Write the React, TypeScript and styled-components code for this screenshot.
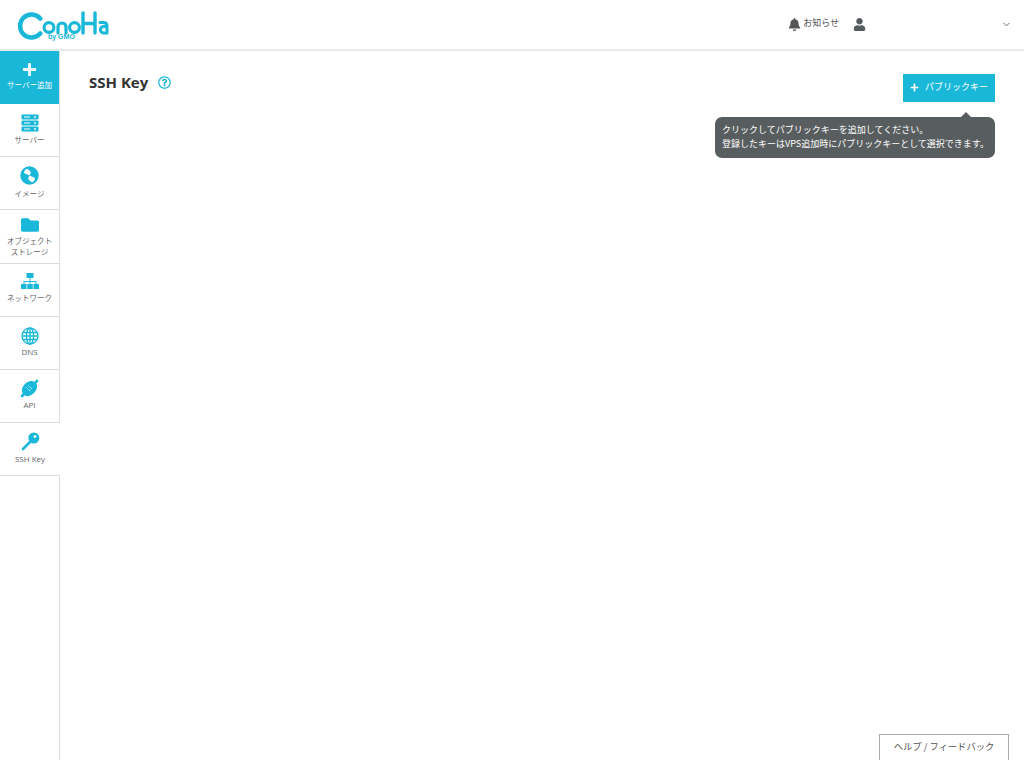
import React from "react";
import styled, { createGlobalStyle } from "styled-components";
import { FaPlus, FaBell, FaUser, FaFolder, FaRegQuestionCircle } from "react-icons/fa";
import { FiChevronDown } from "react-icons/fi";

const CYAN = "#19b8d9";
const FONT = `"Noto Sans CJK JP", "Noto Sans", sans-serif`;

const GlobalStyle = createGlobalStyle`
  html, body {
    margin: 0;
    height: 100%;
    background: #fff;
    font-family: ${FONT};
    overflow: hidden;
  }
`;

const Page = styled.div`
  width: 1024px;
  height: 760px;
  display: flex;
  flex-direction: column;
  position: relative;
  overflow: hidden;
`;

const Header = styled.header`
  height: 49px;
  flex: none;
  display: flex;
  align-items: center;
  padding: 0 12px 0 18px;
  border-bottom: 2px solid #e9e9e9;
`;

const LogoBox = styled.div`
  width: 92px;
  height: 30px;
  position: relative;
  top: 1px;
`;

const ByGmo = styled.span`
  position: absolute;
  left: 30px;
  top: 22px;
  font: 700 7px/7px "Liberation Sans", sans-serif;
  color: ${CYAN};
  white-space: nowrap;
`;

const HeaderRight = styled.div`
  margin-left: auto;
  display: flex;
  align-items: center;
  color: #555d60;
`;

const Notice = styled.span`
  display: flex;
  align-items: center;
  gap: 2px;
  font-size: 9px;
  line-height: 14px;
  color: #555;
`;

const NoticeText = styled.span`
  padding-bottom: 3px;
`;

const UserSlot = styled.span`
  display: flex;
  margin-left: 14px;
  width: 148px;
`;

const Body = styled.div`
  flex: 1;
  display: flex;
  min-height: 0;
`;

const Sidebar = styled.nav`
  width: 59px;
  flex: none;
  border-right: 1px solid #dcdcdc;
  display: flex;
  flex-direction: column;
`;

const AddItem = styled.div`
  height: 53px;
  background: ${CYAN};
  color: #fff;
  display: flex;
  flex-direction: column;
  align-items: center;
  padding-top: 11px;
  box-sizing: border-box;
  font-size: 7.5px;
  line-height: 12px;
  gap: 2px;
  white-space: nowrap;
`;

const NavItem = styled.div<{ $active?: boolean; $tall?: boolean; $pad: number }>`
  height: ${(p) => (p.$tall ? 54 : 53)}px;
  box-sizing: border-box;
  border-bottom: 1px solid #dcdcdc;
  display: flex;
  flex-direction: column;
  align-items: center;
  padding-top: ${(p) => p.$pad}px;
  background: #fff;
  margin-right: ${(p) => (p.$active ? "-1px" : "0")};
  position: relative;
`;

const NavIcon = styled.div`
  height: 19px;
  display: flex;
  align-items: center;
  justify-content: center;
  color: ${CYAN};
`;

const NavLabel = styled.div<{ $latin?: boolean; $gap: number }>`
  margin-top: ${(p) => p.$gap}px;
  font-size: ${(p) => (p.$latin ? 8 : 7.5)}px;
  line-height: 10.5px;
  color: #666;
  text-align: center;
  white-space: nowrap;
  font-family: ${(p) => (p.$latin ? `"Open Sans", sans-serif` : FONT)};
`;

const Main = styled.main`
  flex: 1;
  position: relative;
  padding: 22px 29px 0 29px;
`;

const TitleRow = styled.div`
  display: flex;
  align-items: flex-start;
  justify-content: space-between;
`;

const TitleGroup = styled.div`
  display: flex;
  align-items: center;
  gap: 10px;
  height: 18px;
`;

const Title = styled.h1`
  margin: 0;
  font: 700 15px/18px "Open Sans", sans-serif;
  color: #333;
`;

const AddButton = styled.button`
  width: 92px;
  height: 28px;
  margin-top: 1px;
  border: none;
  padding: 0 0 2px 7px;
  background: ${CYAN};
  color: #fff;
  display: flex;
  align-items: center;
  gap: 6px;
  font: 400 9px/14px ${FONT};
  white-space: nowrap;
`;

const Tooltip = styled.div`
  position: absolute;
  left: 655px;
  top: 66px;
  width: 280px;
  height: 41px;
  box-sizing: border-box;
  padding: 6px 7px;
  border-radius: 7px;
  background: #585e60;
  color: #fff;
  font-size: 9px;
  line-height: 13.5px;
  white-space: nowrap;

  &::before {
    content: "";
    position: absolute;
    right: 24px;
    top: -5px;
    border-left: 5px solid transparent;
    border-right: 5px solid transparent;
    border-bottom: 5px solid #585e60;
  }
`;

const HelpTab = styled.div`
  position: absolute;
  left: 879px;
  top: 734px;
  width: 130px;
  height: 26px;
  box-sizing: border-box;
  border: 1px solid #aaa;
  border-bottom: none;
  background: #fff;
  color: #555;
  font-size: 9.3px;
  line-height: 22px;
  text-align: center;
`;

const Logo = () => (
  <LogoBox>
    <svg width="92" height="30" viewBox="0 0 92 30" fill="none" stroke={CYAN} strokeLinecap="round" strokeLinejoin="round">
      <path d="M22.3 7.6A11.500 11.500 0 1 0 22.300 22.400" strokeWidth="4.500" />
      <circle cx="31" cy="16.500" r="4.900" strokeWidth="3.200" />
      <path d="M40 22V16a4 4 0 0 1 8 0V22" strokeWidth="3.200" />
      <circle cx="56.500" cy="16.500" r="4.900" strokeWidth="3.200" />
      <path d="M65 2V22M77 2V22M65 12.500H77" strokeWidth="3.400" />
      <path d="M82 11.500h4a3.500 3.500 0 0 1 3 3.500V22h-3.500a3.200 3.200 0 0 1 0-6.400H89" strokeWidth="3" />
    </svg>
    <ByGmo>by GMO</ByGmo>
  </LogoBox>
);

const ServerIcon = () => (
  <svg width="18" height="18" viewBox="0 0 18 18">
    {[0, 6, 12].map((y) => (
      <g key={y}>
        <rect x="0.5" y={y + 0.5} width="17" height="5" rx="1" fill={CYAN} />
        <rect x="3" y={y + 2.5} width="6" height="1" fill="#fff" />
        <circle cx="14" cy={y + 3} r="0.9" fill="#fff" />
      </g>
    ))}
  </svg>
);

const ImageIcon = () => (
  <svg width="19" height="19" viewBox="0 0 19 19">
    <circle cx="9.500" cy="9.500" r="9.200" fill={CYAN} />
    <path d="M9.500 9.500L4 7Q4.200 3.800 6.800 2.800Q9.500 3.500 11 6.500Z" fill="#fff" />
    <path d="M9.500 9.500L15 12Q14.800 15.200 12.200 16.200Q9.500 15.500 8 12.500Z" fill="#fff" />
  </svg>
);

const NetworkIcon = () => (
  <svg width="18" height="16" viewBox="0 0 18 16" fill={CYAN}>
    <rect x="5.500" y="0" width="7" height="5" rx="0.5" />
    <path d="M8.500 5h1v3h6v3h-1V9H9.500v2h-1V9H3.500v2h-1V8h6z" />
    <rect x="0" y="11" width="5.500" height="5" rx="0.5" />
    <rect x="6.250" y="11" width="5.500" height="5" rx="0.5" />
    <rect x="12.500" y="11" width="5.500" height="5" rx="0.5" />
  </svg>
);

const DnsIcon = () => (
  <svg width="18" height="18" viewBox="0 0 18 18" fill="none" stroke={CYAN} strokeWidth="1.300">
    <circle cx="9" cy="9" r="8" />
    <ellipse cx="9" cy="9" rx="3.600" ry="8" />
    <path d="M9 1v16M1.800 5.500h14.400M1 9h16M1.800 12.500h14.400" />
  </svg>
);

const ApiIcon = () => (
  <svg width="19" height="19" viewBox="0 0 19 19">
    <ellipse cx="9.500" cy="9.500" rx="8.500" ry="6.500" transform="rotate(-45 9.500 9.500)" fill={CYAN} />
    <path d="M6.500 8.500l3.500 3.500M8.500 6.500l3.500 3.500" stroke="#fff" strokeWidth="1" strokeDasharray="1 1" />
    <path d="M2 17l2.500-2.500M14.500 4.500L17 2" stroke={CYAN} strokeWidth="2.600" strokeLinecap="round" />
  </svg>
);

const KeyIcon = () => (
  <svg width="19" height="19" viewBox="0 0 19 19">
    <circle cx="12.800" cy="6" r="5.500" fill={CYAN} />
    <circle cx="14" cy="4.600" r="1.400" fill="#fff" />
    <path d="M9.500 9.500L2 17" stroke={CYAN} strokeWidth="2.600" strokeLinecap="round" />
  </svg>
);

const items = [
  { label: ["サーバー"], icon: <ServerIcon />, pad: 9, gap: 3 },
  { label: ["イメージ"], icon: <ImageIcon />, pad: 9, gap: 4 },
  { label: ["オブジェクト", "ストレージ"], icon: <FaFolder size={18} />, tall: true, pad: 5, gap: 2 },
  { label: ["ネットワーク"], icon: <NetworkIcon />, pad: 7, gap: 3 },
  { label: ["DNS"], icon: <DnsIcon />, latin: true, pad: 9, gap: 2 },
  { label: ["API"], icon: <ApiIcon />, latin: true, pad: 9, gap: 2 },
  { label: ["SSH Key"], icon: <KeyIcon />, latin: true, active: true, pad: 9, gap: 3 },
];

export default function App() {
  return (
    <Page>
      <GlobalStyle />
      <Header>
        <Logo />
        <HeaderRight>
          <Notice>
            <FaBell size={13} />
            <NoticeText>お知らせ</NoticeText>
          </Notice>
          <UserSlot>
            <FaUser size={13} />
          </UserSlot>
          <FiChevronDown size={11} />
        </HeaderRight>
      </Header>
      <Body>
        <Sidebar>
          <AddItem>
            <FaPlus size={15} />
            サーバー追加
          </AddItem>
          {items.map((item) => (
            <NavItem key={item.label[0]} $active={item.active} $tall={item.tall} $pad={item.pad}>
              <NavIcon>{item.icon}</NavIcon>
              <NavLabel $latin={item.latin} $gap={item.gap}>
                {item.label.map((line) => (
                  <div key={line}>{line}</div>
                ))}
              </NavLabel>
            </NavItem>
          ))}
        </Sidebar>
        <Main>
          <TitleRow>
            <TitleGroup>
              <Title>SSH Key</Title>
              <FaRegQuestionCircle size={13} color={CYAN} />
            </TitleGroup>
            <AddButton>
              <FaPlus size={9} />
              パブリックキー
            </AddButton>
          </TitleRow>
          <Tooltip>
            クリックしてパブリックキーを追加してください。
            <br />
            登録したキーはVPS追加時にパブリックキーとして選択できます。
          </Tooltip>
        </Main>
      </Body>
      <HelpTab>ヘルプ / フィードバック</HelpTab>
    </Page>
  );
}
